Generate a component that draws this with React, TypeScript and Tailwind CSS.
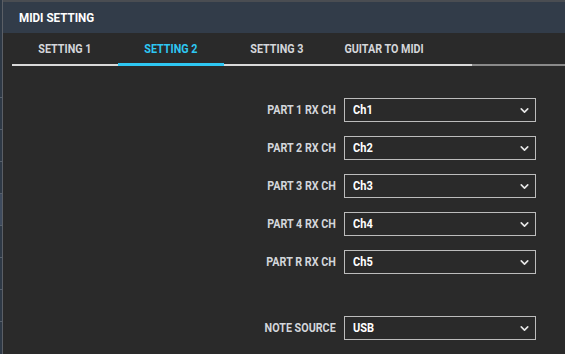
import { ChevronDown } from "lucide-react";

const tabs = ["SETTING 1", "SETTING 2", "SETTING 3", "GUITAR TO MIDI"];

const rows = [
  { label: "PART 1 RX CH", value: "Ch1" },
  { label: "PART 2 RX CH", value: "Ch2" },
  { label: "PART 3 RX CH", value: "Ch3" },
  { label: "PART 4 RX CH", value: "Ch4" },
  { label: "PART R RX CH", value: "Ch5" },
];

// the device font is a condensed bold face, so squeeze Roboto a little
const SelectRow = ({ label, value }: { label: string; value: string }) => (
  <div className="flex items-center justify-end">
    <span className="mr-[8px] inline-block origin-right scale-x-[0.86] whitespace-nowrap text-[12.5px] font-bold text-[#d3d6db]">
      {label}
    </span>
    <div className="flex h-[24px] w-[192px] items-center justify-between border border-[#bcbcbc] bg-[#2a2a2a] pl-[8px] pr-[4px]">
      <span className="inline-block origin-left scale-x-[0.85] text-[13px] font-bold text-white">
        {value}
      </span>
      <ChevronDown className="h-[13px] w-[13px] text-[#e6e6e6]" strokeWidth={3} />
    </div>
  </div>
);

export default function App() {
  const active = 1;
  const segments = [0, 1, 2, 3, 4, 5, 6, 7];

  return (
    <div
      className="flex h-[354px] w-[565px] overflow-hidden bg-[#2a2a2a]"
      style={{ fontFamily: "Roboto, 'Liberation Sans', sans-serif" }}
    >
      {/* sidebar strip behind the panel */}
      <div className="flex w-[2px] flex-col bg-[#2e3946] pt-[97px]">
        {segments.map((i) => (
          <div
            key={i}
            className={`h-[32px] shrink-0 border-t border-[#56606c] ${
              i === 3 ? "bg-[#3e4b5e]" : "bg-[#2e3946]"
            }`}
          />
        ))}
      </div>
      <div className="w-[1px] bg-[#5b5f66]" />

      <div className="flex flex-1 flex-col">
        <div className="h-[2px] bg-[#4a4d52]" />
        <div className="flex h-[31px] items-center bg-[#323c49] pl-[16px]">
          <span className="inline-block origin-left scale-x-[0.86] text-[13.5px] font-bold text-white">
            MIDI SETTING
          </span>
        </div>

        <div className="flex h-[33px] items-end pl-[9px]">
          <div className="flex w-full">
            <div className="flex border-b-2 border-[#d9d9d9]">
              {tabs.map((t, i) => (
                <div
                  key={t}
                  className={`relative flex h-[31px] items-center justify-center pt-[2px] ${
                    i === 3 ? "w-[108px]" : "w-[106px]"
                  } ${i === active ? "text-[#2ec7f3]" : "text-[#d4d6da]"}`}
                >
                  <span className="inline-block scale-x-[0.86] whitespace-nowrap text-[12.5px] font-bold">
                    {t}
                  </span>
                  {i === active && (
                    <div className="absolute -bottom-[2px] left-0 right-0 h-[3px] bg-[#2ec7f3]" />
                  )}
                </div>
              ))}
              <div className="w-[34px]" />
            </div>
            <div className="flex-1 border-b-2 border-[#8a8a8a]" />
          </div>
        </div>

        <div className="flex flex-col pt-[32px] pr-[29px]">
          <div className="flex flex-col gap-[14px]">
            {rows.map((r) => (
              <SelectRow key={r.label} label={r.label} value={r.value} />
            ))}
          </div>
          <div className="mt-[42px]">
            <SelectRow label="NOTE SOURCE" value="USB" />
          </div>
        </div>
      </div>
    </div>
  );
}
